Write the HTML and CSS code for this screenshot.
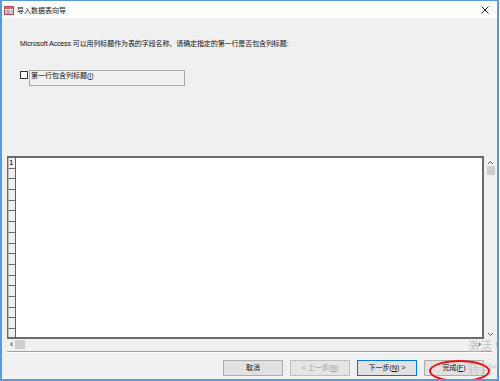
FILE: index.html
```html
<!DOCTYPE html>
<html>
<head>
<meta charset="utf-8" />
<title>导入数据表向导</title>
<link rel="stylesheet" href="styles.css">
</head>
<body>
<div class="window">
	<div class="titlebar">
		<svg class="appicon" width="10" height="9" viewBox="0 0 10 9">
			<rect x="0.5" y="0.5" width="9" height="8" fill="#fff" stroke="#b5485a"/>
			<rect x="1" y="1" width="8" height="2" fill="#d9657a"/>
			<line x1="1" y1="5" x2="9" y2="5" stroke="#8a8a8a"/>
			<line x1="1" y1="7" x2="9" y2="7" stroke="#8a8a8a"/>
			<line x1="4" y1="3" x2="4" y2="8" stroke="#8a8a8a"/>
		</svg>
		<span class="title">导入数据表向导</span>
		<svg class="close" width="8" height="8" viewBox="0 0 8 8">
			<path d="M0.5 0.5 L7.5 7.5 M7.5 0.5 L0.5 7.5" stroke="#222" stroke-width="1"/>
		</svg>
	</div>
	<div class="content">
		<p class="intro">Microsoft Access 可以用列标题作为表的字段名称。请确定指定的第一行是否包含列标题:</p>
		<div class="option">
			<span class="check"></span>
			<span class="optbox">第一行包含列标题(<u>I</u>)</span>
		</div>
		<div class="gridwrap">
			<div class="gridmain">
				<div class="grid">
					<div class="rownums">
						<div class="rn">1</div><div class="rn"></div><div class="rn"></div><div class="rn"></div>
						<div class="rn"></div><div class="rn"></div><div class="rn"></div><div class="rn"></div>
						<div class="rn"></div><div class="rn"></div><div class="rn"></div><div class="rn"></div>
						<div class="rn"></div><div class="rn"></div><div class="rn"></div><div class="rn"></div>
						<div class="rn"></div><div class="rn"></div>
					</div>
				</div>
				<div class="hscroll">
					<span class="arrow">&#8249;</span>
					<span class="hthumb"></span>
					<span class="spacer"></span>
					<span class="arrow">&#8250;</span>
				</div>
			</div>
			<div class="vscroll">
				<svg width="7" height="5" viewBox="0 0 7 5"><path d="M1 4 L3.5 1.5 L6 4" fill="none" stroke="#555" stroke-width="1"/></svg>
				<span class="vthumb"></span>
				<span class="spacer"></span>
				<svg width="7" height="5" viewBox="0 0 7 5"><path d="M1 1 L3.5 3.5 L6 1" fill="none" stroke="#555" stroke-width="1"/></svg>
			</div>
		</div>
		<div class="sep"></div>
		<div class="buttons">
			<span class="btn">取消</span>
			<span class="btn disabled">&lt; 上一步(<u>B</u>)</span>
			<span class="btn default">下一步(<u>N</u>) &gt;</span>
			<span class="btn">完成(<u>F</u>)</span>
		</div>
	</div>
	<div class="watermark">激活 Windows<br />转到“设置”以激活 Windows。</div>
	<div class="mark"></div>
</div>
</body>
</html>
```

FILE: styles.css
```css
*{ margin:0; padding:0; box-sizing:border-box;}
body{ width:500px; height:381px; overflow:hidden; background:#fff; font-family:"Liberation Sans","Noto Sans CJK SC",sans-serif; font-size:7px; color:#000;}
.window{ width:499px; height:381px; position:relative; overflow:hidden; display:flex; flex-direction:column; border:2px solid #5a9ad9; border-top:1px solid #5a9ad9; background:#f0f0f0;}
.titlebar{ height:17px; background:#fff; display:flex; align-items:center; padding-left:2px; padding-right:6px; flex-shrink:0;}
.appicon{ margin-top:1px;}
.title{ margin-left:3px; font-size:7px; color:#111;}
.close{ margin-left:auto; margin-right:2px;}
.content{ flex:1; display:flex; flex-direction:column; padding-left:5px;}
.intro{ margin-top:21px; margin-left:13px; height:10px; line-height:10px; color:#111; letter-spacing:-0.1px;}
.option{ margin-top:21px; margin-left:13px; display:flex; align-items:flex-start; height:15px;}
.check{ width:8px; height:8px; margin-top:1px; border:1px solid #333; background:#fff;}
.optbox{ margin-left:1px; width:156px; height:16px; border:1px solid #a9a9a9; padding-left:1px; line-height:9px; color:#111;}
.gridwrap{ margin-top:71px; display:flex; height:193px;}
.gridmain{ width:477px; display:flex; flex-direction:column;}
.grid{ height:183px; background:#fff; border-top:2px solid #6b6b6b; border-left:1px solid #6b6b6b; border-right:2px solid #6b6b6b; border-bottom:2px solid #6b6b6b; overflow:hidden; display:flex;}
.rownums{ width:8px; display:flex; flex-direction:column;}
.rn{ height:10.7px; flex-shrink:0; background:#f0f0f0; border-right:1px solid #5e5e5e; border-bottom:1px solid #6b6b6b; border-left:1px solid #bdbdbd; font-size:8px; line-height:9px;}
.hscroll{ height:10px; display:flex; align-items:center; padding:0 3px;}
.hscroll .arrow{ font-size:9px; line-height:10px; color:#444; font-weight:bold;}
.hthumb{ width:10px; height:9px; margin-left:2px; background:#cdcdcd;}
.spacer{ flex:1;}
.vscroll{ width:13px; height:185px; display:flex; flex-direction:column; align-items:center; padding-top:4px; padding-bottom:4px;}
.vthumb{ width:8px; height:9px; margin-top:1px; background:#cdcdcd;}
.sep{ margin-top:2px; width:485px; height:2px; border-top:1px solid #a0a0a0; border-bottom:1px solid #fff;}
.buttons{ margin-top:7px; display:flex; gap:7px; padding-left:216px;}
.btn{ width:60px; height:16px; background:#e1e1e1; border:1px solid #adadad; text-align:center; line-height:14px; color:#111;}
.btn.disabled{ color:#a0a0a0; border-color:#bfbfbf; background:#e5e5e5;}
.btn.default{ border:1px solid #0078d7;}
.watermark{ position:absolute; left:466px; top:335px; width:200px; font-size:12px; line-height:23px; color:#c6c6c6; white-space:nowrap; pointer-events:none;}
.mark{ position:absolute; left:427px; top:359px; width:61px; height:22px; border:2px solid #e81010; border-radius:50%;}
```
